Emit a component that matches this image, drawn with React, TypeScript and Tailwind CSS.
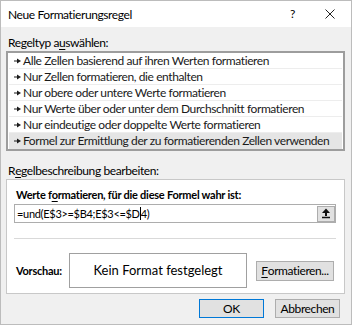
import React from "react";

const items = [
  "Alle Zellen basierend auf ihren Werten formatieren",
  "Nur Zellen formatieren, die enthalten",
  "Nur obere oder untere Werte formatieren",
  "Nur Werte über oder unter dem Durchschnitt formatieren",
  "Nur eindeutige oder doppelte Werte formatieren",
  "Formel zur Ermittlung der zu formatierenden Zellen verwenden",
];

function RowArrow() {
  return (
    <svg width="7" height="6" viewBox="0 0 7 6" className="shrink-0">
      <path d="M0 3h3.5" stroke="#1b1b1b" strokeWidth="1" />
      <path d="M3 0.5L7 3L3 5.5Z" fill="#1b1b1b" />
    </svg>
  );
}

function RefIcon() {
  return (
    <svg width="10" height="11" viewBox="0 0 10 11">
      <path d="M5 0.5L9 5H1Z" fill="#111" />
      <path d="M4 5h2v3H4z" fill="#111" />
      <path d="M1 9.5h8" stroke="#111" strokeWidth="1.5" />
    </svg>
  );
}

export default function App() {
  return (
    <div className="w-[352px] h-[325px] overflow-hidden bg-[#f0f0f0] border border-[#bcbcbc] flex flex-col text-[12px] tracking-[-0.4px] leading-none text-black font-['Segoe_UI','Lato',sans-serif]">
      {/* title bar */}
      <div className="h-[26px] bg-white flex items-center shrink-0">
        <span className="pl-[7px] pt-[1px]">Neue Formatierungsregel</span>
        <span className="ml-auto mr-[30px] text-[12px]">?</span>
        <svg width="10" height="10" viewBox="0 0 10 10" className="mr-[16px]">
          <path d="M0.5 0.5L9.5 9.5M9.5 0.5L0.5 9.5" stroke="#222" strokeWidth="1" />
        </svg>
      </div>

      <div className="flex flex-col pl-[5px] pr-[6px]">
        <div className="mt-[9px] h-[14px] flex items-center pl-[2px]">
          Regeltyp a<span className="underline underline-offset-2">u</span>swählen:
        </div>

        {/* rule type list */}
        <div className="mt-[1px] h-[100px] border-2 border-[#9d9d9d] bg-white flex flex-col px-[1px]">
          {items.map((t, i) => (
            <div
              key={t}
              className={`h-[16px] flex items-center gap-[2px] pl-[5px] border-b ${
                i === items.length - 1 ? "bg-[#e5e5e5] border-transparent" : "border-[#ededed]"
              } text-[#1a1a1a]`}
            >
              <RowArrow />
              <span className="whitespace-nowrap">{t}</span>
            </div>
          ))}
        </div>

        <div className="mt-[13px] h-[14px] flex items-center pl-[2px]">
          R<span className="underline underline-offset-2">e</span>gelbeschreibung bearbeiten:
        </div>

        {/* rule description */}
        <div className="mt-[1px] border border-[#c8c8c8] bg-white flex flex-col">
          <div className="mt-[7px] h-[14px] flex items-center pl-[9px] font-bold text-[11px] tracking-[-0.25px]">
            Werte f<span className="underline underline-offset-2">o</span>rmatieren, für die diese Formel wahr ist:
          </div>
          <div className="mt-[3px] ml-[7px] mr-[8px] h-[19px] border border-[#adadad] flex items-center text-[11px] tracking-[-0.3px]">
            <span className="pl-[2px] whitespace-nowrap">=und(E$3&gt;=$B4;E$3&lt;=$D</span>
            <span className="w-[1px] h-[13px] bg-black" />
            <span>4)</span>
            <div className="ml-auto w-[18px] h-[16px] bg-[#e1e1e1] border border-[#adadad] flex items-center justify-center">
              <RefIcon />
            </div>
          </div>
          <div className="mt-[15px] ml-[7px] mr-[8px] h-[1px] bg-[#d9d9d9]" />
          <div className="mt-[14px] h-[35px] flex items-center">
            <span className="pl-[9px] w-[62px] font-bold text-[11px] tracking-[-0.25px]">Vorschau:</span>
            <div className="w-[178px] h-[35px] border border-[#a0a0a0] flex items-center justify-center text-[13px] tracking-normal">
              Kein Format festgelegt
            </div>
            <button className="ml-[9px] w-[78px] h-[20px] bg-[#e1e1e1] border border-[#adadad] flex items-center justify-center">
              <span className="underline underline-offset-2">F</span>ormatieren...
            </button>
          </div>
          <div className="h-[5px]" />
        </div>

        <div className="mt-[5px] flex justify-end gap-[11px] mr-[5px]">
          <button className="w-[65px] h-[19px] bg-[#e1e1e1] border border-[#0078d7] flex items-center justify-center">
            OK
          </button>
          <button className="w-[65px] h-[19px] bg-[#e1e1e1] border border-[#adadad] flex items-center justify-center">
            Abbrechen
          </button>
        </div>
      </div>
    </div>
  );
}
